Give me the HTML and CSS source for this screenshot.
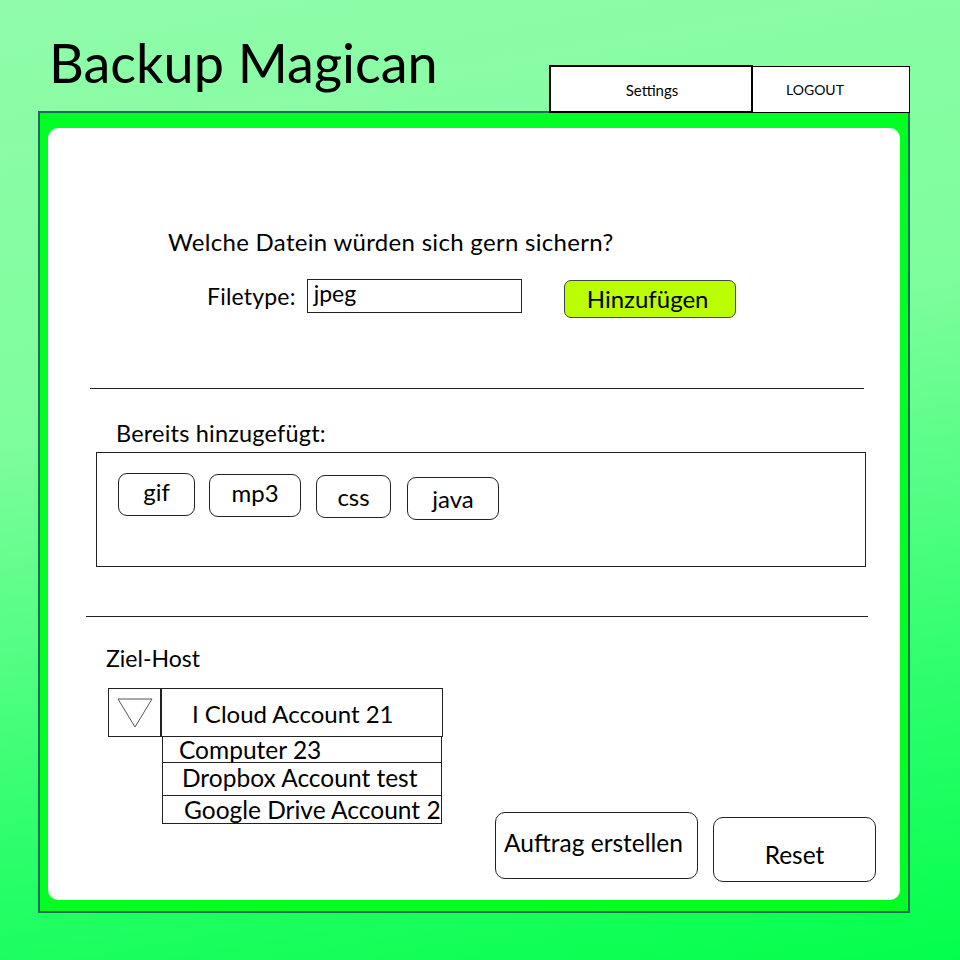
FILE: index.html
```html
<!DOCTYPE html>
<html lang="de">
<head>
<meta charset="utf-8">
<title>Backup Magican</title>
<link rel="stylesheet" href="styles.css">
</head>
<body>
<div class="page">
  <header class="header">
    <h1 class="title">Backup Magican</h1>
    <nav class="tabs">
      <a class="tab tab-settings">Settings</a>
      <a class="tab tab-logout">LOGOUT</a>
    </nav>
  </header>
  <main class="frame">
    <section class="panel">
      <p class="question">Welche Datein würden sich gern sichern?</p>
      <div class="add-row">
        <label class="ft-label">Filetype:</label>
        <div class="ft-input">jpeg</div>
        <button class="btn-add">Hinzufügen</button>
      </div>
      <hr class="rule rule-1">
      <p class="added-label">Bereits hinzugefügt:</p>
      <div class="tag-box">
        <span class="tag tag-gif">gif</span>
        <span class="tag tag-mp3">mp3</span>
        <span class="tag tag-css">css</span>
        <span class="tag tag-java">java</span>
      </div>
      <hr class="rule rule-2">
      <p class="host-label">Ziel-Host</p>
      <div class="bottom-row">
        <div class="dropdown">
          <div class="dd-head">
            <div class="dd-arrow">
              <svg width="36" height="30" viewBox="0 0 36 30"><path d="M1 1 L35 1 L18 29 Z" fill="none" stroke="#555" stroke-width="1"/></svg>
            </div>
            <div class="dd-value">I Cloud Account 21</div>
          </div>
          <ul class="dd-list">
            <li class="dd-opt opt-1">Computer 23</li>
            <li class="dd-opt opt-2">Dropbox Account test</li>
            <li class="dd-opt opt-3">Google Drive Account 2</li>
          </ul>
        </div>
        <div class="actions">
          <button class="btn-action btn-create">Auftrag erstellen</button>
          <button class="btn-action btn-reset">Reset</button>
        </div>
      </div>
    </section>
  </main>
</div>
</body>
</html>
```

FILE: styles.css
```css
* { box-sizing: border-box; }
html, body { margin: 0; padding: 0; }
body {
  width: 960px;
  height: 960px;
  overflow: hidden;
  font-family: Lato, "Open Sans", sans-serif;
  color: #000;
  background: linear-gradient(170deg, #90fcaa 0%, #7dfd9c 40%, #2dfe6c 75%, #03ff4c 100%);
}
.page { width: 960px; height: 960px; }

.header {
  height: 111px;
  display: flex;
  justify-content: space-between;
  align-items: flex-start;
  position: relative;
  z-index: 2;
}
.title {
  margin: 32px 0 0 49px;
  font-weight: 400;
  font-size: 54px;
  line-height: 62px;
}
.tabs {
  display: flex;
  margin: 65px 50px 0 0;
  height: 48px;
}
.tab {
  background: #fff;
  border: 2px solid #000;
  font-size: 14px;
  display: flex;
  justify-content: center;
}
.tab-settings { width: 204px; padding-top: 14px; padding-left: 2px; font-size: 15px; }
.tab-logout {
  width: 157px;
  height: 47px;
  margin-top: 1px;
  border-width: 1px 1px 1px 0;
  padding-top: 14px;
  justify-content: flex-start;
  padding-left: 33px;
}

.frame {
  margin-left: 38px;
  width: 872px;
  height: 802px;
  border: 2px solid #1b6e57;
  background: #00ff22;
  padding: 15px 8px 11px 8px;
}
.panel {
  background: #fff;
  height: 100%;
  border-radius: 10px;
  padding-top: 100px;
  position: relative;
}
.question {
  margin: 0 0 0 120px;
  font-size: 24px;
  line-height: 28px;
  letter-spacing: 0.3px;
}
.add-row {
  display: flex;
  align-items: flex-start;
  margin: 23px 0 0 159px;
}
.ft-label {
  font-size: 23px;
  line-height: 26px;
  margin-top: 4px;
  letter-spacing: 0.2px;
}
.ft-input {
  margin-left: 11px;
  width: 215px;
  height: 34px;
  border: 1px solid #222;
  font-size: 23px;
  line-height: 26px;
  padding-left: 6px;
}
.btn-add {
  margin-left: 42px;
  margin-top: 1px;
  width: 172px;
  height: 38px;
  background: #bbfd01;
  border: 1px solid #444;
  border-radius: 7px;
  font-family: inherit;
  font-size: 24px;
  line-height: 30px;
  color: #000;
  padding: 0 4px 0 0;
}
.rule {
  border: 0;
  height: 1px;
  background: #222;
  margin: 0;
}
.rule-1 { margin: 70px 36px 0 42px; }
.added-label {
  margin: 31px 0 0 68px;
  font-size: 23.5px;
  line-height: 26px;
  letter-spacing: 0.2px;
}
.tag-box {
  margin: 6px 34px 0 48px;
  height: 115px;
  border: 1px solid #222;
  position: relative;
  display: flex;
  align-items: flex-start;
  padding: 20px 0 0 21px;
}
.tag {
  border: 1px solid #222;
  border-radius: 9px;
  height: 43px;
  display: flex;
  justify-content: center;
  font-size: 24px;
  line-height: 36px;
}
.tag-gif { width: 77px; }
.tag-mp3 { width: 92px; margin-left: 14px; margin-top: 1px; }
.tag-css { width: 75px; margin-left: 15px; margin-top: 2px; line-height: 42px; }
.tag-java { width: 92px; margin-left: 16px; margin-top: 4px; line-height: 42px; }
.rule-2 { margin: 49px 32px 0 38px; }
.host-label {
  margin: 27px 0 0 58px;
  font-size: 23px;
  line-height: 28px;
}
.bottom-row {
  display: flex;
  margin: 16px 0 0 60px;
  align-items: flex-start;
}
.dropdown { width: 335px; }
.dd-head { display: flex; height: 49px; }
.dd-arrow {
  width: 54px;
  height: 49px;
  border: 1px solid #222;
  border-right-width: 2px;
  display: flex;
  justify-content: center;
  padding-top: 9px;
}
.dd-value {
  width: 281px;
  border: 1px solid #222;
  border-left: 0;
  font-size: 24px;
  line-height: 50px;
  padding-left: 30px;
}
.dd-list {
  list-style: none;
  margin: -1px 0 0 54px;
  padding: 0;
  width: 280px;
}
.dd-opt {
  border: 1px solid #222;
  border-top: 0;
  font-size: 24.5px;
  white-space: nowrap;
}
.opt-1 { height: 27px; line-height: 25px; padding-left: 16px; border-top: 1px solid #222; }
.opt-2 { height: 33px; line-height: 30px; padding-left: 19px; }
.opt-3 { height: 28px; line-height: 28px; padding-left: 21px; }
.actions {
  display: flex;
  align-items: flex-start;
  margin: 124px 0 0 52px;
}
.btn-action {
  background: #fff;
  border: 1px solid #222;
  border-radius: 10px;
  font-family: inherit;
  font-size: 24.5px;
  color: #000;
  padding: 0;
}
.btn-create { width: 203px; height: 67px; padding-bottom: 6px; padding-right: 6px; }
.btn-reset { width: 163px; height: 65px; margin: 5px 0 0 15px; padding-top: 10px; }
```
